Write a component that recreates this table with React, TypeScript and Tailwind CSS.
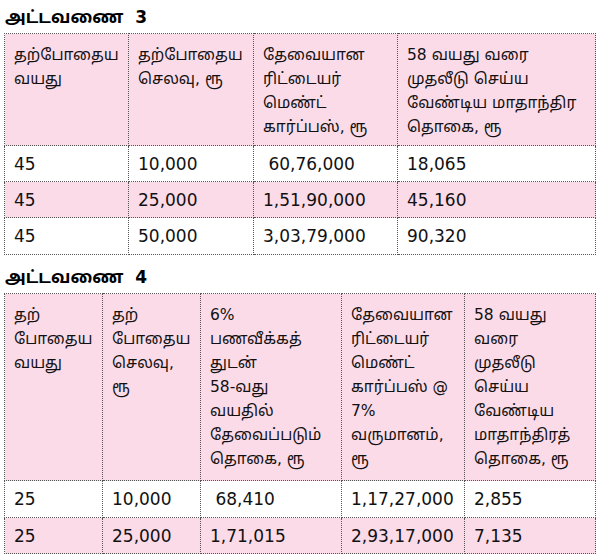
const font = { fontFamily: '"DejaVu Sans", "Noto Sans Tamil", "Lohit Tamil", "Noto Sans", sans-serif' }

type Table = {
  title: string
  titleHeight: string
  widths: string[]
  headers: string[][]
  headerHeight: string
  rows: { cells: string[]; pink: boolean; height: string }[]
}

const tables: Table[] = [
  {
    title: 'அட்டவணை\u00a0 3',
    titleHeight: 'h-[33px] pt-[5px]',
    widths: ['w-[124px]', 'w-[125px]', 'w-[144px]', 'w-[198px]'],
    headers: [
      ['தற்போதைய', 'வயது'],
      ['தற்போதைய', 'செலவு, ரூ'],
      ['தேவையான', 'ரிட்டையர்', 'மெண்ட்', 'கார்ப்பஸ், ரூ'],
      ['58 வயது வரை', 'முதலீடு செய்ய', 'வேண்டிய மாதாந்திர', 'தொகை, ரூ'],
    ],
    headerHeight: 'h-[112px]',
    rows: [
      { cells: ['45', '10,000', '\u00a060,76,000', '18,065'], pink: false, height: 'h-[36px]' },
      { cells: ['45', '25,000', '1,51,90,000', '45,160'], pink: true, height: 'h-[36px]' },
      { cells: ['45', '50,000', '3,03,79,000', '90,320'], pink: false, height: 'h-[37px]' },
    ],
  },
  {
    title: 'அட்டவணை\u00a0 4',
    titleHeight: 'h-[38px] pt-[10px]',
    widths: ['w-[98px]', 'w-[98px]', 'w-[141px]', 'w-[123px]', 'w-[131px]'],
    headers: [
      ['தற்', 'போதைய', 'வயது'],
      ['தற்', 'போதைய', 'செலவு,', 'ரூ'],
      ['6%', 'பணவீக்கத்', 'துடன்', '58-வது', 'வயதில்', 'தேவைப்படும்', 'தொகை, ரூ'],
      ['தேவையான', 'ரிட்டையர்', 'மெண்ட்', 'கார்ப்பஸ் @', '7%', 'வருமானம்,', 'ரூ'],
      ['58 வயது', 'வரை', 'முதலீடு', 'செய்ய', 'வேண்டிய', 'மாதாந்திரத்', 'தொகை, ரூ'],
    ],
    headerHeight: 'h-[187px]',
    rows: [
      { cells: ['25', '10,000', '\u00a068,410', '1,17,27,000', '2,855'], pink: false, height: 'h-[37px]' },
      { cells: ['25', '25,000', '1,71,015', '2,93,17,000', '7,135'], pink: true, height: 'h-[36px]' },
    ],
  },
]

const cell = 'border border-dotted border-[#555] pl-[9px] pr-1 whitespace-nowrap'

function DataTable({ table }: { table: Table }) {
  return (
    <div>
      <div className={`${table.titleHeight} pl-[5px] text-[17px] font-bold leading-[24px] text-black`}>
        {table.title}
      </div>
      <table className="ml-[4px] w-[591px] table-fixed border-collapse text-[17px] text-[#111]">
        <colgroup>
          {table.widths.map((w, i) => (
            <col key={i} className={w} />
          ))}
        </colgroup>
        <thead>
          <tr className={`${table.headerHeight} bg-[#fcdbe9]`}>
            {table.headers.map((lines, i) => (
              <th key={i} className={`${cell} pt-[9px] align-top text-left text-[15.5px] font-normal leading-[24px]`}>
                {lines.map((line, j) => (
                  <div key={j}>{line}</div>
                ))}
              </th>
            ))}
          </tr>
        </thead>
        <tbody>
          {table.rows.map((row, i) => (
            <tr key={i} className={`${row.height} ${row.pink ? 'bg-[#fcdbe9]' : 'bg-white'}`}>
              {row.cells.map((c, j) => (
                <td key={j} className={`${cell} align-middle leading-[20px]`}>
                  {c}
                </td>
              ))}
            </tr>
          ))}
        </tbody>
      </table>
    </div>
  )
}

export default function App() {
  return (
    <div className="w-[600px] h-[558px] overflow-hidden bg-white" style={font}>
      <DataTable table={tables[0]} />
      <DataTable table={tables[1]} />
    </div>
  )
}
